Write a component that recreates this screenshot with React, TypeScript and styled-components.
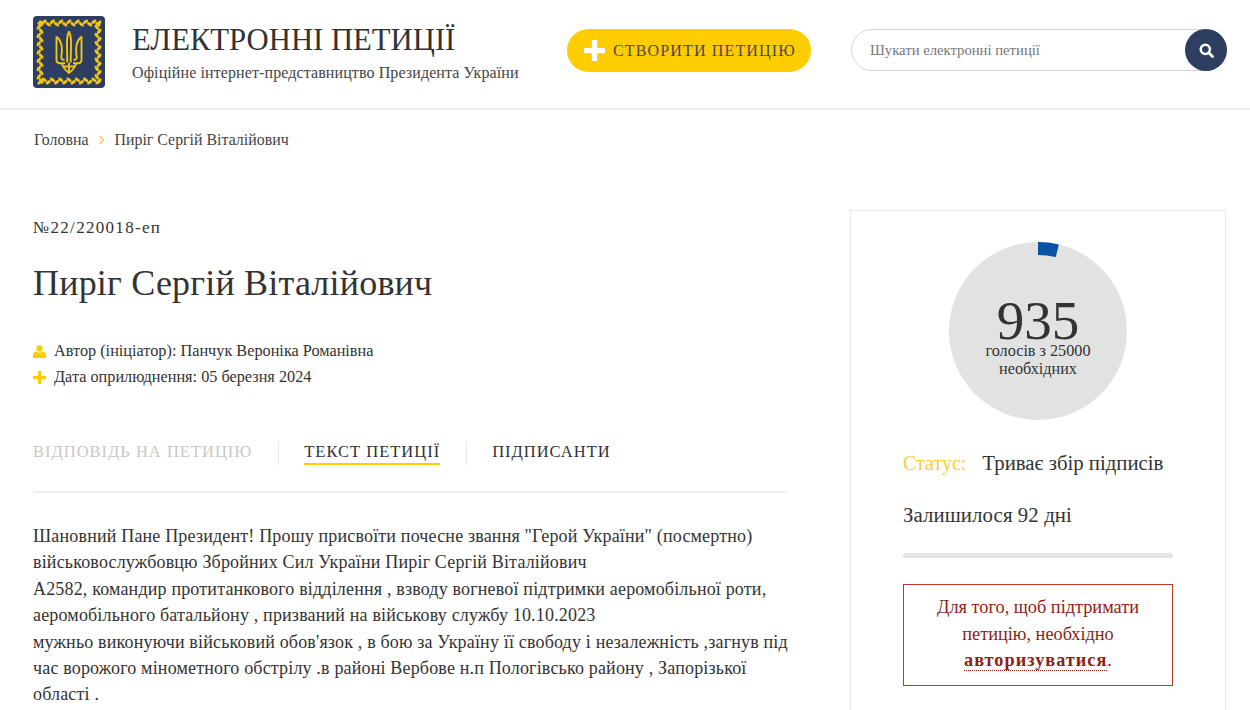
import React from "react";
import styled, { createGlobalStyle } from "styled-components";

const GlobalStyle = createGlobalStyle`
  html, body {
    margin: 0;
    padding: 0;
    background: #fff;
  }
  body {
    font-family: "Liberation Serif", "Times New Roman", serif;
    color: #333;
  }
  * {
    box-sizing: border-box;
  }
`;

const petitionLines = [
  'Шановний Пане Президент! Прошу присвоїти почесне звання "Герой України" (посмертно)',
  "військовослужбовцю Збройних Сил України Пиріг Сергій Віталійович",
  "А2582, командир протитанкового відділення , взводу вогневої підтримки аеромобільної роти,",
  "аеромобільного батальйону , призваний на військову службу 10.10.2023",
  "мужньо виконуючи військовий обов'язок , в бою за Україну її свободу і незалежність ,загнув під",
  "час ворожого мінометного обстрілу .в районі Вербове н.п Пологівсько району , Запорізької",
  "області .",
];

const wreathLeaves = () => {
  const leaves: { x: number; y: number; r: number }[] = [];
  for (let i = 0; i <= 14; i++) {
    const p = 7 + i * 4.14;
    const flip = i % 2 === 0 ? 1 : -1;
    leaves.push({ x: p, y: 7 + flip * 1.2, r: 35 * flip });
    leaves.push({ x: p, y: 65 + flip * 1.2, r: -35 * flip });
    leaves.push({ x: 7 + flip * 1.2, y: p, r: 55 * flip });
    leaves.push({ x: 65 + flip * 1.2, y: p, r: -55 * flip });
  }
  return leaves;
};

const Logo = () => (
  <LogoBox viewBox="0 0 72 72" aria-hidden="true">
    <rect width="72" height="72" rx="4" fill="#2d3e61" />
    {wreathLeaves().map((leaf, i) => (
      <ellipse
        key={i}
        cx={leaf.x}
        cy={leaf.y}
        rx="3"
        ry="1.6"
        fill="#f2c414"
        transform={`rotate(${leaf.r} ${leaf.x} ${leaf.y})`}
      />
    ))}
    <g fill="none" stroke="#f2c414" strokeWidth="1.9" strokeLinejoin="round">
      <path d="M36 15.500c-1.800 3.600-2.200 8-2 13.500l.3 17.500M36 15.500c1.800 3.600 2.200 8 2 13.500l-.3 17.500" />
      <path d="M23.500 20.500v23.500c0 2.400 1.100 3.200 3.200 3.200h5.300M23.500 20.500c3.800 3.400 5.700 8.500 5.400 14.500l-.6 5.800c-.2 2.200 1.200 3.400 3.200 2.800" />
      <path d="M48.500 20.500v23.500c0 2.400-1.100 3.200-3.200 3.200H40M48.500 20.500c-3.800 3.400-5.700 8.500-5.400 14.500l.6 5.800c.2 2.200-1.200 3.400-3.200 2.800" />
      <path d="M29 47.500c.5 4 3 6.300 7 9.500 4-3.200 6.500-5.500 7-9.500M36 47v10M30 50.500h12" />
    </g>
  </LogoBox>
);

const PlusIcon = ({ size }: { size: number }) => (
  <svg width={size} height={size} viewBox="0 0 16 16" aria-hidden="true">
    <path d="M6 0h4v6h6v4h-6v6H6v-6H0V6h6z" fill="currentColor" />
  </svg>
);

const UserIcon = () => (
  <svg width="13" height="13" viewBox="0 0 13 13" aria-hidden="true">
    <circle cx="6.500" cy="3.400" r="3.200" fill="currentColor" />
    <path d="M0 13v-2.600C0 8 1.600 6.600 3.200 6.400c1 .8 2.100 1.200 3.300 1.200s2.300-.4 3.300-1.200C11.400 6.600 13 8 13 10.400V13z" fill="currentColor" />
  </svg>
);

const SearchIcon = () => (
  <svg width="15" height="15" viewBox="0 0 15 15" aria-hidden="true">
    <circle cx="6.300" cy="6.300" r="4.600" fill="none" stroke="#fff" strokeWidth="2.500" />
    <path d="M9.800 9.800l3.700 3.700" stroke="#fff" strokeWidth="2.800" strokeLinecap="round" />
  </svg>
);

const ChevronIcon = () => (
  <svg width="7" height="10" viewBox="0 0 7 10" aria-hidden="true">
    <path d="M1.500 1l4 4-4 4" fill="none" stroke="currentColor" strokeWidth="1.500" />
  </svg>
);

const ProgressArc = () => (
  <ArcSvg viewBox="-89 -89 178 178" aria-hidden="true">
    <path d="M0 -82.500A82.500 82.500 0 0 1 19.300 -80.200" fill="none" stroke="#0a52a3" strokeWidth="13" />
  </ArcSvg>
);

export default function App() {
  return (
    <Page>
      <GlobalStyle />
      <Header>
        <Brand>
          <Logo />
          <BrandText>
            <SiteTitle>ЕЛЕКТРОННІ ПЕТИЦІЇ</SiteTitle>
            <SiteSubtitle>Офіційне інтернет-представництво Президента України</SiteSubtitle>
          </BrandText>
        </Brand>
        <CreateButton>
          <PlusIcon size={21} />
          <span>СТВОРИТИ ПЕТИЦІЮ</span>
        </CreateButton>
        <SearchBox>
          <SearchText>Шукати електронні петиції</SearchText>
          <SearchButton>
            <SearchIcon />
          </SearchButton>
        </SearchBox>
      </Header>

      <Breadcrumbs>
        <span>Головна</span>
        <CrumbArrow>
          <ChevronIcon />
        </CrumbArrow>
        <span>Пиріг Сергій Віталійович</span>
      </Breadcrumbs>

      <Content>
        <Main>
          <PetitionNumber>№22/220018-еп</PetitionNumber>
          <PetitionTitle>Пиріг Сергій Віталійович</PetitionTitle>
          <MetaList>
            <MetaRow>
              <MetaIcon>
                <UserIcon />
              </MetaIcon>
              Автор (ініціатор): Панчук Вероніка Романівна
            </MetaRow>
            <MetaRow>
              <MetaIcon>
                <PlusIcon size={13} />
              </MetaIcon>
              Дата оприлюднення: 05 березня 2024
            </MetaRow>
          </MetaList>
          <Tabs>
            <Tab $muted>ВІДПОВІДЬ НА ПЕТИЦІЮ</Tab>
            <TabDivider />
            <Tab $active>ТЕКСТ ПЕТИЦІЇ</Tab>
            <TabDivider />
            <Tab>ПІДПИСАНТИ</Tab>
          </Tabs>
          <PetitionText>
            {petitionLines.map((line) => (
              <TextLine key={line}>{line}</TextLine>
            ))}
          </PetitionText>
        </Main>

        <Sidebar>
          <Dial>
            <ProgressArc />
            <VoteCount>935</VoteCount>
            <VoteCaption>
              голосів з 25000
              <br />
              необхідних
            </VoteCaption>
          </Dial>
          <StatusRow>
            <StatusLabel>Статус:</StatusLabel>
            <span>Триває збір підписів</span>
          </StatusRow>
          <Remaining>Залишилося 92 дні</Remaining>
          <TimeBar />
          <AuthNotice>
            Для того, щоб підтримати петицію, необхідно <AuthLink>авторизуватися</AuthLink>.
          </AuthNotice>
        </Sidebar>
      </Content>
    </Page>
  );
}

const Page = styled.div`
  height: 710px;
  overflow: hidden;
`;

const Header = styled.header`
  display: flex;
  align-items: flex-start;
  height: 110px;
  padding: 16px 23px 0 33px;
  border-bottom: 2px solid #eeeeee;
`;

const Brand = styled.div`
  display: flex;
  width: 534px;
`;

const LogoBox = styled.svg`
  flex: none;
  width: 72px;
  height: 72px;
`;

const BrandText = styled.div`
  margin-left: 27px;
`;

const SiteTitle = styled.div`
  margin-top: 4px;
  font-size: 30.700px;
  line-height: 40px;
  color: #333;
  white-space: nowrap;
`;

const SiteSubtitle = styled.div`
  margin-top: 3px;
  font-size: 16px;
  line-height: 20px;
  letter-spacing: 0.100px;
  color: #444;
  white-space: nowrap;
`;

const CreateButton = styled.div`
  display: flex;
  align-items: center;
  gap: 8px;
  width: 244px;
  height: 43px;
  margin-top: 13px;
  padding-left: 17px;
  border-radius: 22px;
  background: #ffcc00;
  color: #fff;

  span {
    font-size: 16px;
    letter-spacing: 1.150px;
    color: #4a4a55;
    white-space: nowrap;
  }
`;

const SearchBox = styled.div`
  display: flex;
  align-items: center;
  justify-content: space-between;
  width: 376px;
  height: 42px;
  margin: 13px 0 0 40px;
  padding-left: 18px;
  border: 1px solid #d3d3df;
  border-radius: 21px;
`;

const SearchText = styled.span`
  font-size: 14.700px;
  color: #777;
`;

const SearchButton = styled.div`
  display: flex;
  align-items: center;
  justify-content: center;
  width: 42px;
  height: 42px;
  margin-right: -1px;
  border-radius: 50%;
  background: #2d3e61;
`;

const Breadcrumbs = styled.nav`
  display: flex;
  align-items: center;
  height: 20px;
  margin: 20px 0 0 34px;
  font-size: 15.900px;
  color: #444;
`;

const CrumbArrow = styled.span`
  display: flex;
  margin: 0 9px 0 10px;
  color: #ffcc44;
`;

const Content = styled.div`
  display: flex;
  justify-content: space-between;
  margin-top: 60px;
  padding: 0 24px 0 33px;
`;

const Main = styled.main`
  width: 754px;
`;

const PetitionNumber = styled.div`
  margin-top: 8px;
  font-size: 17px;
  line-height: 20px;
  letter-spacing: 1.300px;
  color: #333;
`;

const PetitionTitle = styled.h1`
  margin: 23px 0 0;
  font-size: 36px;
  line-height: 44px;
  font-weight: 400;
  letter-spacing: 0.200px;
  color: #333;
`;

const MetaList = styled.div`
  margin-top: 33px;
`;

const MetaRow = styled.div`
  display: flex;
  align-items: center;
  height: 26px;
  font-size: 16.250px;
  color: #333;
`;

const MetaIcon = styled.span`
  display: flex;
  width: 21px;
  color: #ffcc00;
`;

const Tabs = styled.div`
  display: flex;
  align-items: flex-start;
  height: 50px;
  margin-top: 51px;
`;

const Tab = styled.div<{ $active?: boolean; $muted?: boolean }>`
  height: 24px;
  font-size: 16.500px;
  line-height: 22px;
  letter-spacing: 1px;
  white-space: nowrap;
  color: ${({ $muted }) => ($muted ? "#c8c8c8" : "#333")};
  border-bottom: 2px solid ${({ $active }) => ($active ? "#ffcc00" : "transparent")};
`;

const TabDivider = styled.div`
  width: 1px;
  height: 24px;
  margin: 0 25px 0 26px;
  background: #e8e8e8;
`;

const PetitionText = styled.div`
  padding-top: 30px;
  border-top: 2px solid #eeeeee;
`;

const TextLine = styled.div`
  height: 26.400px;
  font-size: 18px;
  line-height: 26.400px;
  letter-spacing: 0.170px;
  color: #333;
  white-space: nowrap;
`;

const Sidebar = styled.aside`
  display: flex;
  flex-direction: column;
  flex: none;
  width: 376px;
  height: 520px;
  padding: 31px 52px 0;
  border: 1px solid #e8e8e8;
`;

const Dial = styled.div`
  position: relative;
  display: flex;
  flex-direction: column;
  align-items: center;
  align-self: center;
  width: 178px;
  height: 178px;
  padding-top: 57px;
  border-radius: 50%;
  background: #e2e2e2;
`;

const ArcSvg = styled.svg`
  position: absolute;
  top: 0;
  left: 0;
  width: 178px;
  height: 178px;
`;

const VoteCount = styled.div`
  font-size: 55px;
  line-height: 44px;
  color: #333;
`;

const VoteCaption = styled.div`
  font-size: 16.200px;
  line-height: 17.500px;
  text-align: center;
  color: #333;
`;

const StatusRow = styled.div`
  display: flex;
  align-items: baseline;
  gap: 16px;
  margin-top: 31px;
  height: 24px;
  font-size: 20.800px;
  line-height: 24px;
  color: #333;
  white-space: nowrap;
`;

const StatusLabel = styled.span`
  font-size: 20px;
  color: #ffcc33;
`;

const Remaining = styled.div`
  margin-top: 28px;
  height: 24px;
  font-size: 20.800px;
  line-height: 24px;
  letter-spacing: 0.100px;
  color: #333;
`;

const TimeBar = styled.div`
  height: 5px;
  margin-top: 26px;
  border-radius: 3px;
  background: #e4e4e4;
`;

const AuthNotice = styled.div`
  height: 102px;
  margin-top: 26px;
  padding: 9px 25px 0;
  border: 1px solid #c0392b;
  font-size: 18.300px;
  line-height: 26.500px;
  text-align: center;
  color: #8f1d14;
`;

const AuthLink = styled.a`
  font-weight: 700;
  letter-spacing: 1px;
  border-bottom: 1px dotted #8f1d14;
`;
